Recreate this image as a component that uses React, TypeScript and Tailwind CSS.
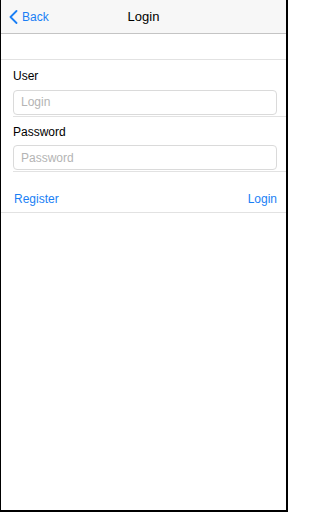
import { useState } from 'react';

export default function App() {
  const [user, setUser] = useState('');
  const [password, setPassword] = useState('');

  return (
    <div
      className="h-[512px] w-[288px] bg-white border-l border-r-2 border-b-2 border-black flex flex-col overflow-hidden"
      style={{ fontFamily: '"Liberation Sans", Arial, sans-serif' }}
    >
      {/* Navigation bar */}
      <div className="h-[34px] shrink-0 bg-[#f7f7f7] border-b border-[#c4c4c4] flex items-center relative">
        <button className="flex items-center gap-[4px] pl-[8px] text-[#1a7ff5] text-[12px]">
          <svg width="9" height="14" viewBox="0 0 9 14" fill="none">
            <path d="M7.5 1L1.5 7L7.5 13" stroke="#1a7ff5" strokeWidth="1.8" strokeLinecap="round" strokeLinejoin="round" />
          </svg>
          <span>Back</span>
        </button>
        <span className="absolute left-1/2 -translate-x-1/2 text-[13px] text-black">Login</span>
      </div>

      {/* Spacer section */}
      <div className="h-[26px] shrink-0 border-b border-[#e2e2e2]" />

      {/* Form */}
      <div className="flex flex-col">
        <div className="pl-[12px]">
          <div className="pt-[8px] text-[12px] text-black leading-[16px]">User</div>
          <div className="pt-[5px] pr-[9px]">
            <input
              type="text"
              placeholder="Login"
              value={user}
              onChange={(e) => setUser(e.target.value)}
              className="w-full h-[25px] rounded-[4px] border border-[#dadada] px-[7px] text-[12px] placeholder:text-[#b4b4b4] outline-none"
            />
          </div>
          <div className="mt-[1px] border-b border-[#e2e2e2]" />
        </div>

        <div className="pl-[12px]">
          <div className="pt-[7px] text-[12px] text-black leading-[16px]">Password</div>
          <div className="pt-[5px] pr-[9px]">
            <input
              type="password"
              placeholder="Password"
              value={password}
              onChange={(e) => setPassword(e.target.value)}
              className="w-full h-[25px] rounded-[4px] border border-[#dadada] px-[7px] text-[12px] placeholder:text-[#b4b4b4] outline-none"
            />
          </div>
          <div className="mt-[1px] border-b border-[#e2e2e2]" />
        </div>

        <div className="h-[41px] flex items-end justify-between pl-[13px] pr-[9px] pb-[4px] border-b border-[#e2e2e2] text-[12px] text-[#1a7ff5]">
          <button>Register</button>
          <button>Login</button>
        </div>
      </div>

      <div className="flex-1" />
    </div>
  );
}
